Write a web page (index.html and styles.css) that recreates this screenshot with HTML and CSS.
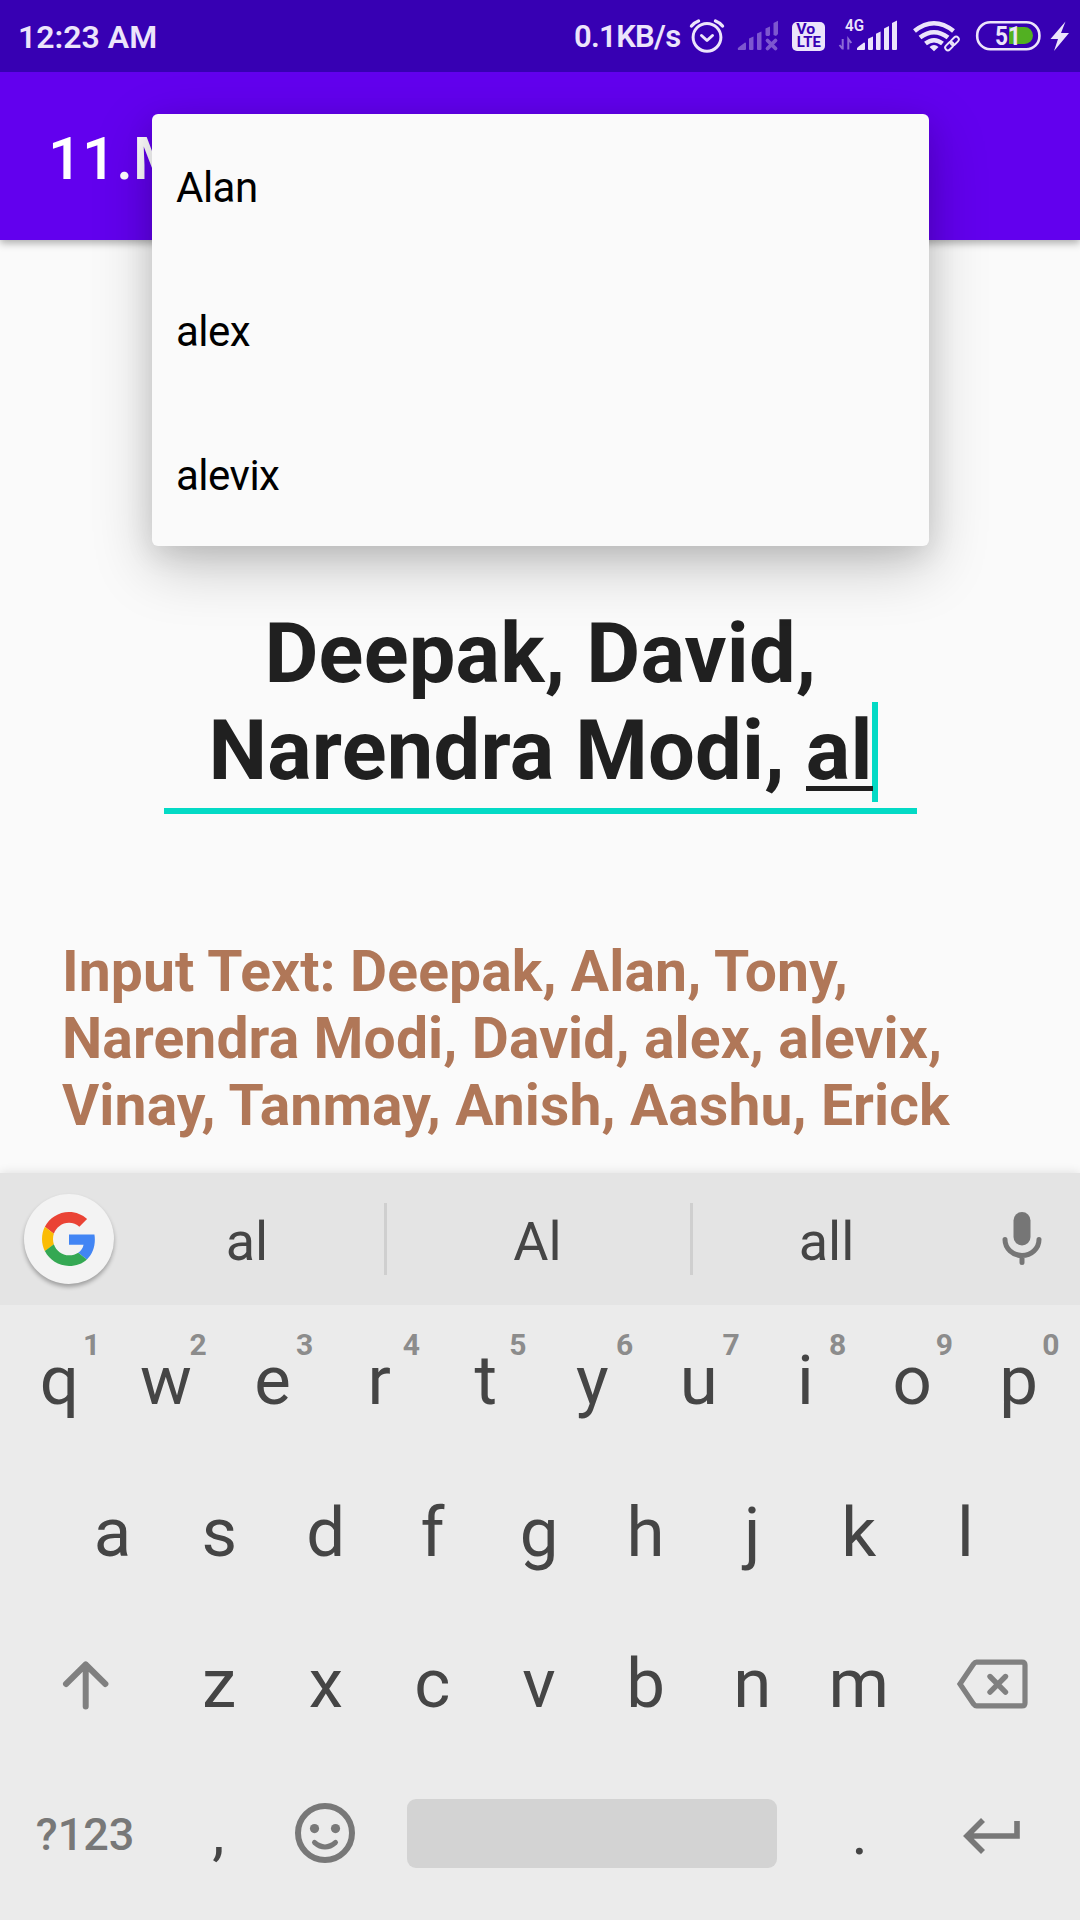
FILE: index.html
```html
<!DOCTYPE html>
<html lang="en">
<head>
<meta charset="utf-8">
<title>MultiAutoCompleteTextView</title>
<link rel="stylesheet" href="styles.css">
</head>
<body>
<div class="screen">
  <header class="status">
    <span class="clock">12:23 AM</span>
    <div class="status-icons">
      <span class="speed">0.1KB/s</span>
      <svg class="alarm" width="36" height="36" viewBox="689 18 36 36" fill="none" stroke="#ece4fb" stroke-linecap="round">
        <circle cx="707" cy="37.3" r="13.9" stroke-width="3"/>
        <path d="M701.5 35.5l5.500 5 5.500-5" stroke-width="3" stroke-linejoin="round"/>
        <path d="M691.500 26q3-3.500 7-5M722.500 26q-3-3.500-7-5" stroke-width="3.400"/>
      </svg>
      <svg class="nosignal" width="42" height="32" viewBox="737 20 42 32" fill="#7d57cf">
        <path d="M738 50q-1-2 1-3l6-4.500q1 0 1 1V49q0 1-1 1z"/>
        <path d="M749 38.500l4.500-2V49q0 1-1 1H750q-1 0-1-1zM757 33.500l4.500-2V49q0 1-1 1H758q-1 0-1-1zM765.500 28.500l4.500-2V35l-1 1h-2.500l-1-1zM773.500 23l4.500-2.300V34l-2 2-2.500-1z"/>
        <path d="M767.500 40.500l8 8m0-8l-8 8" stroke="#7d57cf" stroke-width="3.800" stroke-linecap="round"/>
      </svg>
      <svg class="volte" width="33" height="30" viewBox="792 22 33 30">
        <rect x="792" y="22" width="33" height="29" rx="5" fill="#ece4fb"/>
        <text class="volte-text" x="796.300" y="34.300" textLength="19" lengthAdjust="spacingAndGlyphs">Vo</text>
        <text class="volte-text" x="796.800" y="47.300" textLength="24" lengthAdjust="spacingAndGlyphs">LTE</text>
      </svg>
      <svg class="mobile" width="59" height="34" viewBox="839 18 59 34" fill="#ece4fb">
        <text class="net-text" x="845" y="31.300" textLength="19" lengthAdjust="spacingAndGlyphs">4G</text>
        <path d="M842.700 39v10.500M839.500 45l3.200 4M848.300 49.500V39l3 4" fill="none" stroke="#8d6bd6" stroke-width="2"/>
        <path d="M857 50q-.5-2 1-3l6-4.500q1 0 1 1V49q0 1-1 1z"/>
        <path d="M868 38.800l5-2.300V49q0 1-1 1h-3q-1 0-1-1zM876 33.800l4.600-2.300V49q0 1-1 1H877q-1 0-1-1zM884 28.500l5-2.500V49q0 1-1 1h-3q-1 0-1-1zM892 23l5-2.500V49q0 1-1 1h-3q-1 0-1-1z"/>
      </svg>
      <svg class="wifi" width="47" height="32" viewBox="913 20 47 32" fill="none" stroke="#ece4fb">
        <path d="M914.500 31q19.500-15.500 39 0" stroke-width="4.600"/>
        <path d="M920 37.500q14-10.500 28 0" stroke-width="4.600"/>
        <path d="M925.500 43.500q8.500-6.500 17 0" stroke-width="4.600"/>
        <path d="M929.500 47q4.500-4 9 0l-4.500 4.300z" fill="#ece4fb" stroke="none"/>
        <g stroke="#3700b3" stroke-width="5" transform="rotate(-45 952 43.500)">
          <rect x="943.500" y="40.800" width="9.500" height="5.400" rx="2.700"/>
          <rect x="951" y="40.800" width="9.500" height="5.400" rx="2.700"/>
        </g>
        <g stroke-width="1.900" transform="rotate(-45 952 43.500)">
          <rect x="943.500" y="40.800" width="9.500" height="5.400" rx="2.700"/>
          <rect x="951" y="40.800" width="9.500" height="5.400" rx="2.700"/>
        </g>
      </svg>
      <svg class="battery" width="65" height="32" viewBox="976 20 65 32">
        <rect x="977.200" y="22.200" width="62.200" height="27" rx="13" fill="none" stroke="#ece4fb" stroke-width="2.600"/>
        <path d="M1009 27h15.500a8.500 8.500 0 0 1 0 17H1009z" fill="#52b022"/>
        <text class="battery-text" x="995" y="44.500" textLength="26" lengthAdjust="spacingAndGlyphs">51</text>
      </svg>
      <svg class="bolt" width="20" height="32" viewBox="1050 20 20 32">
        <path d="M1065.500 21.500L1050.500 39h7.500l-4 12 15-18h-8z" fill="#ece4fb"/>
      </svg>
    </div>
  </header>

  <div class="appbar"><h1 class="title">11.M</h1></div>

  <main class="content">
    <div class="field">Deepak, David,<br>Narendra Modi, <span class="composing">al<i class="cursor"></i></span></div>
    <p class="result">Input Text: Deepak, Alan, Tony,<br>Narendra Modi, David, alex, alevix,<br>Vinay, Tanmay, Anish, Aashu, Erick</p>
  </main>

  <ul class="popup">
    <li>Alan</li>
    <li>alex</li>
    <li>alevix</li>
  </ul>

  <section class="keyboard">
    <div class="strip">
      <div class="google">
        <svg width="54" height="54" viewBox="0 0 48 48">
          <path fill="#ea4335" d="M24 9.500c3.540 0 6.710 1.220 9.210 3.600l6.850-6.850C35.900 2.380 30.470 0 24 0 14.620 0 6.510 5.380 2.560 13.220l7.980 6.190C12.430 13.720 17.740 9.500 24 9.500z"/>
          <path fill="#4285f4" d="M46.980 24.550c0-1.570-.15-3.090-.38-4.550H24v9.020h12.940c-.58 2.960-2.260 5.480-4.780 7.180l7.730 6c4.510-4.180 7.090-10.360 7.090-17.650z"/>
          <path fill="#fbbc05" d="M10.530 28.590c-.48-1.450-.76-2.990-.76-4.590s.27-3.140.76-4.590l-7.980-6.190C.92 16.460 0 20.120 0 24c0 3.880.92 7.540 2.560 10.780l7.970-6.190z"/>
          <path fill="#34a853" d="M24 48c6.480 0 11.930-2.130 15.890-5.810l-7.730-6c-2.150 1.450-4.920 2.300-8.160 2.300-6.260 0-11.570-4.220-13.470-9.910l-7.980 6.190C6.510 42.620 14.620 48 24 48z"/>
        </svg>
      </div>
      <span class="suggestion first">al</span>
      <span class="suggestion middle">Al</span>
      <span class="suggestion last">all</span>
      <svg class="mic" width="40" height="54" viewBox="1001.500 1212 40 54">
        <rect x="1013" y="1212" width="17" height="33.500" rx="8.500" fill="#767676"/>
        <path d="M1004.500 1239.500a17 16 0 0 0 34 0M1021.500 1256v6.500" fill="none" stroke="#767676" stroke-width="5" stroke-linecap="round"/>
      </svg>
    </div>

    <div class="row top">
      <span class="key">q<sup>1</sup></span><span class="key">w<sup>2</sup></span><span class="key">e<sup>3</sup></span><span class="key">r<sup>4</sup></span><span class="key">t<sup>5</sup></span><span class="key">y<sup>6</sup></span><span class="key">u<sup>7</sup></span><span class="key">i<sup>8</sup></span><span class="key">o<sup>9</sup></span><span class="key">p<sup>0</sup></span>
    </div>
    <div class="row">
      <span class="key">a</span><span class="key">s</span><span class="key">d</span><span class="key">f</span><span class="key">g</span><span class="key">h</span><span class="key">j</span><span class="key">k</span><span class="key">l</span>
    </div>
    <div class="row">
      <span class="key wide">
        <svg class="shift" width="48" height="50" viewBox="62 1661 48 50" fill="none" stroke="#808080" stroke-width="6" stroke-linecap="round" stroke-linejoin="round"><path d="M85.700 1707.500V1665.500M66 1685l19.700-19.500L105.400 1685"/></svg>
      </span><span class="key">z</span><span class="key">x</span><span class="key">c</span><span class="key">v</span><span class="key">b</span><span class="key">n</span><span class="key">m</span><span class="key wide">
        <svg class="delete" width="72" height="50" viewBox="956.500 1659.500 72 50" fill="none" stroke="#808080" stroke-width="5.200" stroke-linejoin="round"><path d="M977 1662.600H1022.500q3 0 3 3V1703.400q0 3-3 3H977q-1.500 0-3-2L960.500 1684.500 974 1664.600q1.500-2 3-2z" stroke-linejoin="miter"/><path d="M990.500 1677l15.500 15.700m0-15.700l-15.500 15.700" stroke-width="5.400" stroke-linecap="round"/></svg>
      </span>
    </div>
    <div class="row bottom">
      <span class="key wide symbols">?123</span><span class="key punct">,</span><span class="key">
        <svg width="62" height="62" viewBox="294 1802 62 62" fill="none" stroke="#787878"><circle cx="325" cy="1833" r="27" stroke-width="6"/><path d="M314.500 1842.500q10.500 9 21 0" stroke-width="5" stroke-linecap="round"/><circle cx="314.500" cy="1828.600" r="4.600" fill="#787878" stroke="none"/><circle cx="335.500" cy="1828.600" r="4.600" fill="#787878" stroke="none"/></svg>
      </span><span class="space"></span><span class="key punct">.</span><span class="key wide">
        <svg class="enter" width="58" height="38" viewBox="963 1817 58 38" fill="none" stroke="#787878" stroke-width="5.600"><path d="M1017 1821v15H967M983 1820l-16 16 16 16"/></svg>
      </span>
    </div>
  </section>
</div>
</body>
</html>
```

FILE: styles.css
```css
* { box-sizing: border-box; margin: 0; padding: 0; }

body { font-family: Roboto, "Noto Sans", sans-serif; background: #fafafa; }

svg { display: block; flex: none; overflow: visible; }

.screen {
  position: relative;
  display: flex;
  flex-direction: column;
  width: 1080px;
  height: 1920px;
  overflow: hidden;
  background: #fafafa;
}

/* Status bar */
.status {
  display: flex;
  justify-content: space-between;
  height: 72px;
  padding: 0 10px 0 18px;
  background: #3700b3;
  color: #ece4fb;
  font-size: 32px;
  font-weight: 700;
  line-height: 74px;
  position: relative;
  z-index: 2;
}

.clock { font-weight: 600; }
.speed { width: 115px; font-size: 31px; font-weight: 600; line-height: 73px; letter-spacing: -0.7px; white-space: nowrap; }
.status-icons { display: flex; align-items: flex-start; }
.status-icons svg { margin-top: 20px; }
.status-icons .alarm { margin-top: 18px; }
.status-icons .nosignal { margin-left: 12px; }
.status-icons .volte { margin: 22px 0 0 13px; }
.status-icons .mobile { margin: 18px 0 0 14px; }
.status-icons .wifi { margin-left: 15px; }
.status-icons .battery { margin-left: 16px; }
.status-icons .bolt { margin-left: 9px; }
.volte-text { font-size: 14px; font-weight: 700; fill: #3700b3; }
.net-text { font-size: 17px; font-weight: 600; }
.battery-text { font-size: 26px; font-weight: 700; fill: #ece4fb; }

/* App bar */
.appbar {
  height: 168px;
  padding-left: 48px;
  background: #6200ee;
  box-shadow: 0 3px 8px rgba(0, 0, 0, 0.32);
  position: relative;
  z-index: 1;
}

.title { color: #fff; font-size: 60px; font-weight: 500; line-height: 173px; }

/* Content */
.content { height: 933px; padding-top: 365px; }

.field {
  width: 753px;
  height: 209px;
  margin-left: 164px;
  border-bottom: 6px solid #03dac5;
  color: #202020;
  font-size: 83px;
  font-weight: 700;
  line-height: 97px;
  letter-spacing: 0.22px;
  text-align: center;
  white-space: nowrap;
}

.composing { position: relative; }

.composing::after {
  content: "";
  position: absolute;
  left: 0;
  right: 0;
  bottom: 8px;
  height: 5px;
  background: #202020;
}

.cursor {
  position: absolute;
  right: -5px;
  top: 0;
  width: 6px;
  height: 100px;
  background: #03dac5;
}

.result {
  margin: 124px 0 0 62px;
  color: #b07758;
  font-size: 57px;
  font-weight: 700;
  line-height: 67px;
  letter-spacing: 0.12px;
  white-space: nowrap;
}

/* Suggestions dropdown */
.popup {
  position: absolute;
  z-index: 3;
  left: 152px;
  top: 114px;
  width: 777px;
  list-style: none;
  border-radius: 6px;
  background: #fafafa;
  box-shadow: 0 20px 60px rgba(0, 0, 0, 0.22), 0 8px 28px rgba(0, 0, 0, 0.1);
}

.popup li { height: 144px; padding-left: 24px; color: #000; font-size: 42px; line-height: 148px; letter-spacing: -0.5px; }

/* Keyboard */
.keyboard {
  height: 747px;
  background: #ebebeb;
  color: #454545;
  box-shadow: 0 0 10px rgba(0, 0, 0, 0.12);
}

.strip { display: flex; height: 132px; padding-left: 24px; background: #e4e4e4; }

.google {
  display: flex;
  align-items: center;
  justify-content: center;
  width: 90px;
  height: 90px;
  margin-top: 21px;
  border-radius: 50%;
  background: #f3f3f3;
  box-shadow: 0 3px 4px rgba(0, 0, 0, 0.3);
}

.suggestion {
  height: 72px;
  margin-top: 30px;
  font-size: 54px;
  line-height: 77px;
  text-align: center;
}

.first { width: 273px; padding-right: 4px; border-right: 3px solid #cfcfcf; }
.middle { width: 306px; padding-right: 2px; border-right: 3px solid #cfcfcf; }
.last { width: 267px; }
.mic { margin: 39px 0 0 41.5px; }

.row { display: flex; justify-content: center; height: 151.5px; padding-right: 2px; }

.key {
  position: relative;
  display: flex;
  justify-content: center;
  width: 106.6px;
  font-size: 69px;
  line-height: 151px;
}

.key sup {
  position: absolute;
  left: 73px;
  top: 23px;
  width: 25px;
  color: #8c8c8c;
  font-size: 30px;
  font-weight: 700;
  line-height: 34px;
  text-align: center;
}

.key svg { align-self: center; }
.key .shift { margin: 2px 0 0; }
.key .delete { margin: 1px 0 0; }
.wide { width: 160px; }
.bottom .key { line-height: 148px; }
.bottom .key svg { margin-bottom: 4px; }
.bottom .key .enter { margin: 2px 1px 0 0; }
.bottom .punct { font-size: 62px; line-height: 145px; }
.bottom .symbols { color: #787878; font-size: 45px; font-weight: 500; line-height: 150px; }
.space { width: 370px; height: 69px; margin: 39px 29px 0; border-radius: 9px; background: #d3d3d3; }
```
